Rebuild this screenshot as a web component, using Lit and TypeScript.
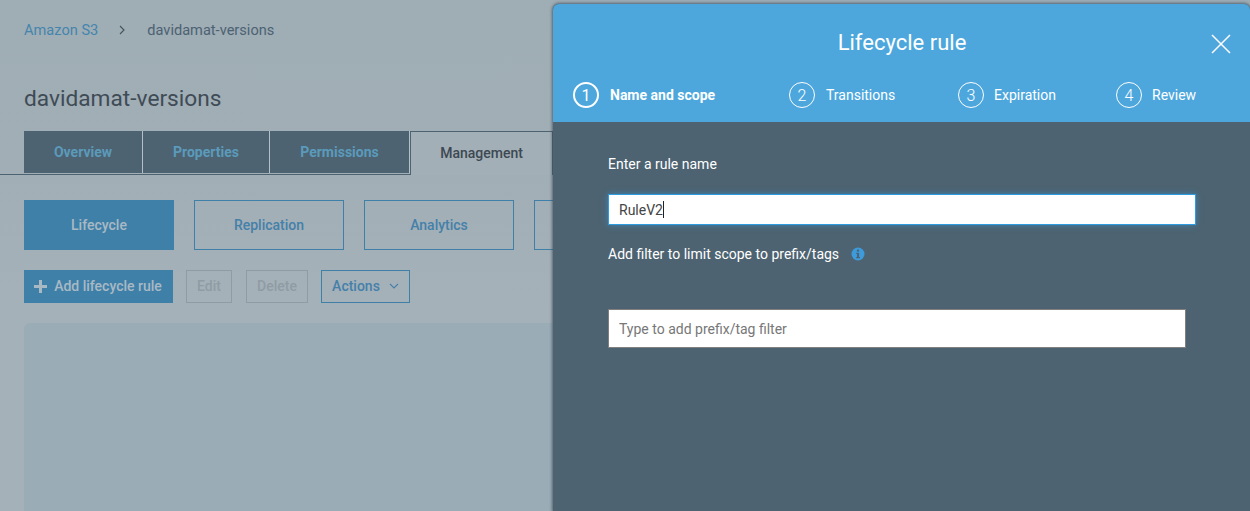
import { LitElement, html, css } from 'lit';
import { customElement } from 'lit/decorators.js';

const STEPS = [
  { n: 1, label: 'Name and scope', left: 20, gap: 11, active: true },
  { n: 2, label: 'Transitions', left: 236, gap: 11 },
  { n: 3, label: 'Expiration', left: 405, gap: 10 },
  { n: 4, label: 'Review', left: 563, gap: 10 },
];

@customElement('app-root')
export class AppRoot extends LitElement {
  static styles = css`
    :host {
      display: block;
      position: relative;
      width: 1250px;
      height: 511px;
      overflow: hidden;
      font-family: Roboto, "Liberation Sans", sans-serif;
      background: #a5b1b9;
    }
    .page {
      height: 511px;
      box-sizing: border-box;
      display: flex;
      flex-direction: column;
      background: linear-gradient(#9fadb5 0, #a1aeb6 170px, #a5b1b9 300px);
    }
    .crumbs {
      display: flex;
      align-items: center;
      padding: 22px 0 0 24px;
      height: 16px;
      font-size: 14.6px;
      color: #4c6272;
    }
    .crumbs a { color: #4585ad; }
    .crumbs svg { margin: 0 22px 0 21px; }
    h1 {
      margin: 41px 0 0 24px;
      font-size: 22.7px;
      line-height: 40px;
      font-weight: 400;
      color: #3f4b55;
    }
    .tabs {
      display: flex;
      margin-top: 12px;
      padding-left: 24px;
      height: 44px;
      box-sizing: border-box;
      border-bottom: 1px solid #4d6371;
    }
    .tab {
      box-sizing: border-box;
      height: 42px;
      display: flex;
      align-items: center;
      justify-content: center;
      background: #4d6371;
      border-right: 1px solid #b4c0c7;
      color: #5b9abb;
      font-size: 14px;
      font-weight: 700;
    }
    .tab.current {
      height: 44px;
      padding-bottom: 1px;
      background: #a2afb7;
      border: 1px solid #4d6371;
      border-bottom: 0;
      color: #3d4852;
      font-weight: 500;
    }
    .sections {
      display: flex;
      gap: 20px;
      margin: 25px 0 0 24px;
    }
    .section {
      box-sizing: border-box;
      flex: none;
      width: 150px;
      height: 50px;
      display: flex;
      align-items: center;
      justify-content: center;
      border: 1px solid #3f80a9;
      color: #4580a9;
      font-size: 14px;
      font-weight: 500;
    }
    .section.current {
      background: #3f80a9;
      color: #a9b9c4;
    }
    .actions {
      display: flex;
      margin: 20px 0 0 24px;
    }
    .btn {
      box-sizing: border-box;
      height: 33px;
      padding-bottom: 1px;
      display: flex;
      align-items: center;
      justify-content: center;
      font-size: 14px;
      font-weight: 500;
    }
    .btn.add {
      width: 149px;
      padding-right: 1px;
      background: #3f80a9;
      color: #a9b9c4;
      gap: 7px;
    }
    .btn.off {
      border: 1px solid #8f9ca4;
      color: #8f9ca4;
    }
    .btn.edit { width: 46px; margin-left: 13px; }
    .btn.delete { width: 62px; margin-left: 14px; }
    .btn.menu {
      width: 89px;
      margin-left: 13px;
      gap: 9px;
      border: 1px solid #3f80a9;
      color: #4580a9;
    }
    .card {
      flex: 1;
      margin: 20px 0 0 24px;
      border-radius: 6px 0 0 0;
      background: #9aacb6;
    }
    .panel {
      position: absolute;
      left: 553px;
      top: 4px;
      right: 0;
      bottom: 0;
      display: flex;
      flex-direction: column;
      background: #4d6371;
      border-radius: 6px 6px 0 0;
      box-shadow: 0 0 3px 1px rgba(60, 75, 88, 0.75);
      overflow: hidden;
    }
    .head {
      position: relative;
      height: 118px;
      flex: none;
      background: #4da7dd;
      color: #fff;
    }
    .title {
      padding: 24px 0 0 1px;
      text-align: center;
      font-size: 22px;
      line-height: 30px;
    }
    .close {
      position: absolute;
      left: 658px;
      top: 30px;
    }
    .step {
      position: absolute;
      top: 78px;
      display: flex;
      align-items: center;
      font-size: 14px;
    }
    .step.active { font-weight: 700; }
    .num {
      box-sizing: border-box;
      width: 26px;
      height: 26px;
      border: 1px solid #fff;
      border-radius: 50%;
      display: flex;
      align-items: center;
      justify-content: center;
      font-size: 16px;
      font-weight: 300;
    }
    .active .num { border-width: 2px; font-weight: 400; }
    .body {
      display: flex;
      flex-direction: column;
      padding: 0 0 0 55px;
      color: #fff;
      font-size: 14px;
    }
    .label {
      display: flex;
      align-items: center;
      height: 16px;
    }
    .label.first { margin-top: 34px; }
    .label.second { margin-top: 21px; }
    .label svg { margin-left: 12px; }
    .name {
      box-sizing: border-box;
      width: 588px;
      height: 31px;
      margin-top: 22px;
      padding: 0 10px;
      display: flex;
      align-items: center;
      background: #fff;
      border: 1px solid #2f9be0;
      box-shadow: 0 0 6px rgba(47, 155, 224, 0.6);
      color: #444;
      font-size: 14px;
    }
    .caret {
      width: 1px;
      height: 17px;
      background: #222;
    }
    .filter {
      box-sizing: border-box;
      width: 578px;
      height: 39px;
      margin-top: 47px;
      padding: 0 10px;
      background: #fff;
      border: 1px solid #808080;
      border-radius: 0;
      outline: none;
      color: #444;
      font-family: inherit;
      font-size: 14px;
    }
    .filter::placeholder { color: #777; opacity: 1; }
  `;

  render() {
    return html`
      <div class="page">
        <div class="crumbs">
          <a>Amazon S3</a>
          <svg width="6" height="10" viewBox="0 0 6 10"><path d="M1 1l4 4-4 4" fill="none" stroke="#44525d" stroke-width="1.1"/></svg>
          <span>davidamat-versions</span>
        </div>
        <h1>davidamat-versions</h1>
        <div class="tabs">
          <div class="tab" style="width:119px">Overview</div>
          <div class="tab" style="width:127px">Properties</div>
          <div class="tab" style="width:140px">Permissions</div>
          <div class="tab current" style="width:143px">Management</div>
        </div>
        <div class="sections">
          <div class="section current">Lifecycle</div>
          <div class="section">Replication</div>
          <div class="section">Analytics</div>
          <div class="section"></div>
        </div>
        <div class="actions">
          <div class="btn add">
            <svg width="13" height="13" viewBox="0 0 13 13"><path d="M5 0h3v5h5v3H8v5H5V8H0V5h5z" fill="#a9b9c4"/></svg>
            Add lifecycle rule
          </div>
          <div class="btn off edit">Edit</div>
          <div class="btn off delete">Delete</div>
          <div class="btn menu">
            Actions
            <svg width="10" height="6" viewBox="0 0 10 6"><path d="M1 1l4 4 4-4" fill="none" stroke="#4580a9" stroke-width="1.1"/></svg>
          </div>
        </div>
        <div class="card"></div>
      </div>
      <div class="panel">
        <div class="head">
          <div class="title">Lifecycle rule</div>
          <svg class="close" width="20" height="20" viewBox="0 0 20 20"><path d="M1 1l18 18M19 1L1 19" fill="none" stroke="#fff" stroke-width="1.5"/></svg>
          ${STEPS.map(
            (s) => html`
              <div class="step ${s.active ? 'active' : ''}" style="left:${s.left}px;gap:${s.gap}px">
                <span class="num">${s.n}</span>
                <span>${s.label}</span>
              </div>
            `,
          )}
        </div>
        <div class="body">
          <div class="label first">Enter a rule name</div>
          <div class="name"><span>RuleV2</span><span class="caret"></span></div>
          <div class="label second">
            Add filter to limit scope to prefix/tags
            <svg width="14" height="14" viewBox="0 0 14 14">
              <circle cx="7" cy="7" r="6.5" fill="#3d9bdc"/>
              <rect x="5.9" y="2.6" width="2.2" height="2" fill="#4d6371"/>
              <path d="M5.2 5.8h2.9v4.2h.9v1.2H5.2V10h.9V7H5.2z" fill="#4d6371"/>
            </svg>
          </div>
          <input class="filter" placeholder="Type to add prefix/tag filter" />
        </div>
      </div>
    `;
  }
}
